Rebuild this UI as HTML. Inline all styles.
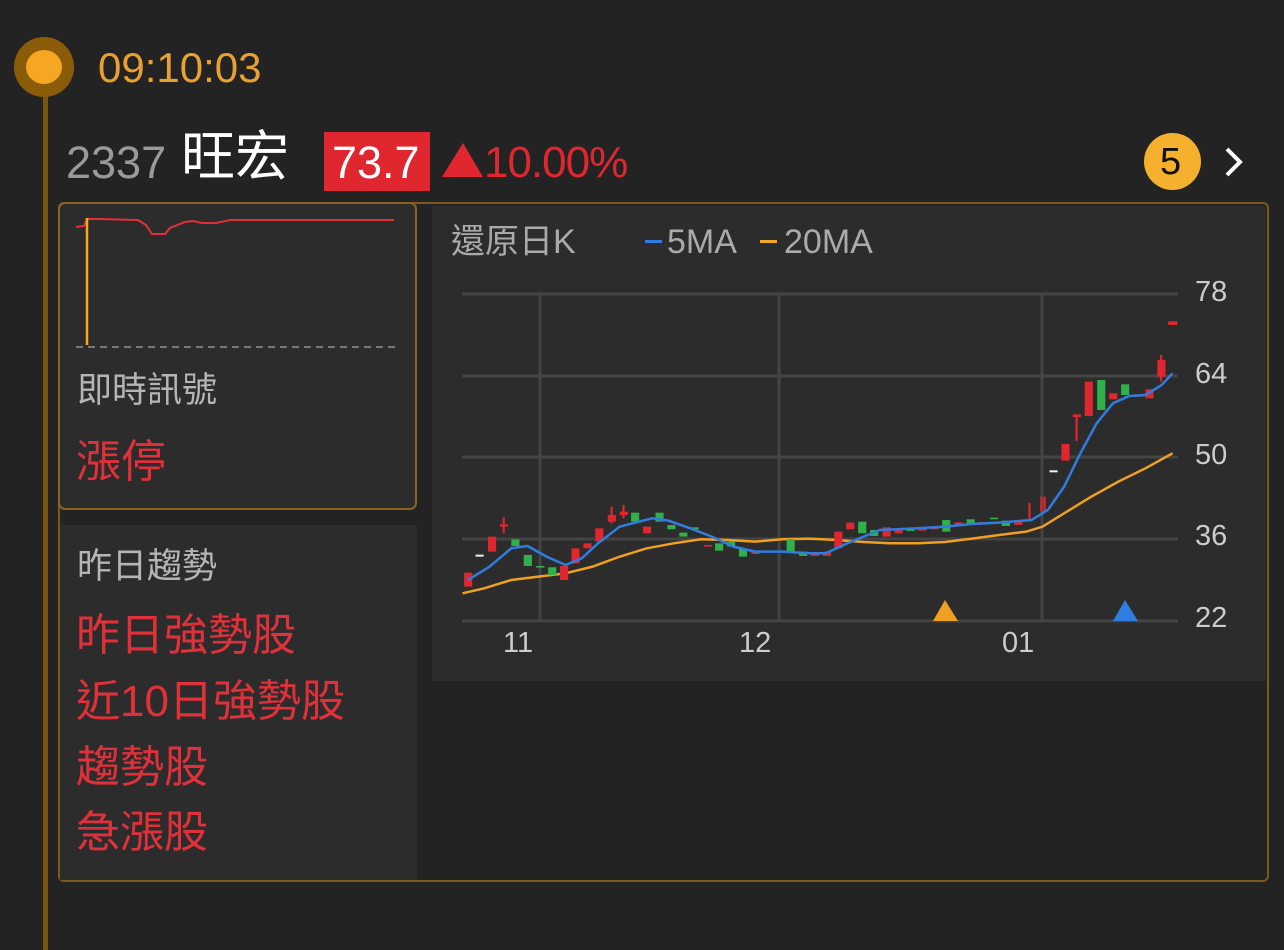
<!DOCTYPE html>
<html><head><meta charset="utf-8"><style>
*{margin:0;padding:0;box-sizing:border-box}
body{width:1284px;height:942px;background:#232323;position:relative;overflow:hidden;font-family:"Liberation Sans","Noto Sans CJK TC",sans-serif}
.a{position:absolute;white-space:nowrap;line-height:1}
</style></head><body>
<div class="a" style="left:43px;top:90px;width:5px;height:860px;background:#7a5510"></div>
<div class="a" style="left:14px;top:37px;width:60px;height:60px;border-radius:50%;background:#8a5c08"></div>
<div class="a" style="left:26px;top:50px;width:36px;height:34px;border-radius:50%;background:#f5a623"></div>
<div class="a" style="left:98px;top:47px;font-size:42px;color:#e8a030">09:10:03</div>

<div class="a" style="left:66px;top:140px;font-size:45px;color:#9a9a9a">2337</div>
<div class="a" style="left:181px;top:130px;font-size:54px;color:#fff">旺宏</div>
<div class="a" style="left:324px;top:132px;width:106px;height:59px;background:#e0262e"></div>
<div class="a" style="left:332px;top:140px;font-size:45px;color:#fff">73.7</div>
<svg class="a" style="left:442px;top:143px" width="42" height="35"><polygon points="21,0 0,34 41,34" fill="#e0262e"/></svg>
<div class="a" style="left:484px;top:141px;font-size:44px;color:#e0262e;letter-spacing:-1px">10.00%</div>
<div class="a" style="left:1144px;top:133px;width:57px;height:57px;border-radius:50%;background:#f5b02e"></div>
<div class="a" style="left:1160px;top:143px;font-size:38px;color:#111">5</div>
<svg class="a" style="left:1222px;top:146px" width="26" height="32"><path d="M5 3 L18 16 L5 29" stroke="#fff" stroke-width="4" fill="none"/></svg>

<div class="a" style="left:58px;top:202px;width:1211px;height:680px;border:2px solid #7a5a1c;border-radius:6px;background:#232323"></div>
<div class="a" style="left:60px;top:525px;width:357px;height:355px;background:#2c2c2c"></div>
<div class="a" style="left:432px;top:206px;width:834px;height:475px;background:#2c2c2c"></div>
<div class="a" style="left:58px;top:202px;width:359px;height:308px;border:2px solid #8a6420;border-radius:7px;background:#2c2c2c"></div>

<svg class="a" style="left:0;top:0" width="420" height="360">
<polyline points="76,227 84,226 87,219 98,219 138,220 146,225 152,234 165,234 170,228 185,222 193,221 202,223 216,223 230,220 394,220" stroke="#e0303a" stroke-width="2" fill="none"/>
<line x1="87" y1="218" x2="87" y2="345" stroke="#f5a623" stroke-width="2.5"/>
<line x1="76" y1="347" x2="398" y2="347" stroke="#777" stroke-width="2" stroke-dasharray="7,5"/>
</svg>
<div class="a" style="left:77px;top:373px;font-size:35px;color:#b5b5b5">即時訊號</div>
<div class="a" style="left:76px;top:439px;font-size:45px;color:#e0303a">漲停</div>
<div class="a" style="left:77px;top:549px;font-size:35px;color:#b5b5b5">昨日趨勢</div>
<div class="a" style="left:76px;top:614px;font-size:44px;color:#e0303a">昨日強勢股</div>
<div class="a" style="left:76px;top:680px;font-size:44px;color:#e0303a">近10日強勢股</div>
<div class="a" style="left:76px;top:746px;font-size:44px;color:#e0303a">趨勢股</div>
<div class="a" style="left:76px;top:811px;font-size:44px;color:#e0303a">急漲股</div>

<div class="a" style="left:451px;top:225px;font-size:34px;color:#aaa">還原日K</div>
<div class="a" style="left:645px;top:240px;width:17px;height:3px;background:#2f7de0"></div>
<div class="a" style="left:667px;top:225px;font-size:34px;color:#aaa">5MA</div>
<div class="a" style="left:760px;top:240px;width:17px;height:3px;background:#f5a623"></div>
<div class="a" style="left:784px;top:225px;font-size:34px;color:#aaa">20MA</div>

<svg class="a" style="left:0;top:0" width="1284" height="942">
<g stroke="#444" stroke-width="3">
<line x1="462" y1="294" x2="1178" y2="294"/><line x1="462" y1="376" x2="1178" y2="376"/><line x1="462" y1="457" x2="1178" y2="457"/><line x1="462" y1="539" x2="1178" y2="539"/><line x1="462" y1="621" x2="1178" y2="621"/>
<line x1="540" y1="294" x2="540" y2="621"/><line x1="779" y1="294" x2="779" y2="621"/><line x1="1042" y1="294" x2="1042" y2="621"/>
</g>
<g transform="translate(430,280) scale(0.542,0.3333)">
<polyline vector-effect="non-scaling-stroke" stroke="#f0a020" stroke-width="2.5" fill="none" points="60,940 100,925 150,900 200,890 250,880 300,860 350,830 400,805 450,790 500,778 550,780 600,785 650,778 700,776 750,780 800,786 850,790 900,790 950,786 1000,776 1050,765 1100,755 1130,740 1170,700 1220,650 1270,605 1320,565 1370,520"/>
<g>
<rect x="63" y="878" width="15" height="42" fill="#e0262e"/>
<rect x="84" y="824" width="15" height="6" fill="#eee"/>
<rect x="107" y="770" width="15" height="45" fill="#e0262e"/>
<rect x="134" y="712" width="4" height="48" fill="#e0262e"/><rect x="129" y="733" width="15" height="7" fill="#e0262e"/>
<rect x="150" y="778" width="15" height="20" fill="#2fb04a"/>
<rect x="173" y="825" width="15" height="33" fill="#2fb04a"/>
<rect x="196" y="858" width="15" height="5" fill="#2fb04a"/>
<rect x="218" y="862" width="15" height="23" fill="#2fb04a"/>
<rect x="240" y="858" width="15" height="42" fill="#e0262e"/>
<rect x="261" y="805" width="15" height="45" fill="#e0262e"/>
<rect x="283" y="790" width="15" height="15" fill="#e0262e"/>
<rect x="305" y="745" width="15" height="40" fill="#e0262e"/>
<rect x="333" y="680" width="4" height="50" fill="#e0262e"/><rect x="328" y="705" width="15" height="20" fill="#e0262e"/>
<rect x="355" y="675" width="4" height="40" fill="#e0262e"/><rect x="350" y="695" width="15" height="10" fill="#e0262e"/>
<rect x="371" y="698" width="15" height="27" fill="#2fb04a"/>
<rect x="393" y="740" width="15" height="20" fill="#e0262e"/>
<rect x="416" y="698" width="15" height="27" fill="#2fb04a"/>
<rect x="438" y="735" width="15" height="13" fill="#2fb04a"/>
<rect x="460" y="758" width="15" height="12" fill="#2fb04a"/>
<rect x="481" y="742" width="15" height="6" fill="#2fb04a"/>
<rect x="505" y="795" width="15" height="5" fill="#e0262e"/>
<rect x="526" y="790" width="15" height="22" fill="#2fb04a"/>
<rect x="548" y="785" width="15" height="15" fill="#2fb04a"/>
<rect x="570" y="808" width="15" height="22" fill="#2fb04a"/>
<rect x="593" y="816" width="15" height="6" fill="#e0262e"/>
<rect x="616" y="813" width="15" height="5" fill="#e0262e"/>
<rect x="658" y="778" width="15" height="40" fill="#2fb04a"/>
<rect x="681" y="815" width="15" height="13" fill="#2fb04a"/>
<rect x="703" y="823" width="15" height="5" fill="#e0262e"/>
<rect x="725" y="815" width="15" height="13" fill="#e0262e"/>
<rect x="746" y="755" width="15" height="50" fill="#e0262e"/>
<rect x="768" y="728" width="15" height="20" fill="#e0262e"/>
<rect x="790" y="725" width="15" height="35" fill="#2fb04a"/>
<rect x="812" y="750" width="15" height="18" fill="#2fb04a"/>
<rect x="835" y="742" width="15" height="28" fill="#e0262e"/>
<rect x="857" y="745" width="15" height="15" fill="#e0262e"/>
<rect x="879" y="748" width="15" height="5" fill="#2fb04a"/>
<rect x="901" y="746" width="15" height="6" fill="#e0262e"/>
<rect x="923" y="743" width="15" height="5" fill="#e0262e"/>
<rect x="945" y="720" width="15" height="35" fill="#2fb04a"/>
<rect x="968" y="727" width="15" height="11" fill="#e0262e"/>
<rect x="990" y="718" width="15" height="14" fill="#2fb04a"/>
<rect x="1011" y="726" width="15" height="5" fill="#e0262e"/>
<rect x="1033" y="713" width="15" height="5" fill="#2fb04a"/>
<rect x="1055" y="722" width="15" height="16" fill="#2fb04a"/>
<rect x="1078" y="725" width="15" height="10" fill="#e0262e"/>
<rect x="1104" y="668" width="4" height="54" fill="#e0262e"/>
<rect x="1126" y="650" width="4" height="45" fill="#e0262e"/><rect x="1132" y="650" width="4" height="45" fill="#e0262e"/>
<rect x="1143" y="571" width="15" height="6" fill="#eee"/>
<rect x="1165" y="492" width="15" height="50" fill="#e0262e"/>
<rect x="1191" y="405" width="4" height="78" fill="#e0262e"/><rect x="1186" y="403" width="15" height="8" fill="#e0262e"/>
<rect x="1208" y="305" width="15" height="103" fill="#e0262e"/>
<rect x="1231" y="300" width="15" height="90" fill="#2fb04a"/>
<rect x="1253" y="340" width="15" height="18" fill="#e0262e"/>
<rect x="1275" y="313" width="15" height="32" fill="#2fb04a"/>
<rect x="1298" y="343" width="15" height="7" fill="#e0262e"/>
<rect x="1320" y="328" width="15" height="27" fill="#e0262e"/>
<rect x="1347" y="225" width="4" height="80" fill="#e0262e"/><rect x="1342" y="240" width="15" height="50" fill="#e0262e"/>
<rect x="1362" y="124" width="17" height="11" fill="#e0262e"/>
</g>
<polyline vector-effect="non-scaling-stroke" stroke="#2f7de0" stroke-width="2.5" fill="none" points="70,900 110,860 150,805 180,798 215,830 250,855 280,835 310,790 350,740 410,715 440,722 480,745 520,770 560,800 600,815 650,815 700,820 730,820 770,790 800,770 830,750 900,745 950,740 1000,732 1050,728 1110,720 1140,690 1170,620 1200,520 1230,430 1260,370 1290,348 1320,345 1350,315 1370,280"/>
</g>
<polygon points="945,600 933,621 958,621" fill="#f0a020"/>
<polygon points="1125,600 1113,621 1138,621" fill="#2f7de0"/>
</svg>
<div class="a" style="left:1195px;top:278px;font-size:29px;color:#ccc">78</div>
<div class="a" style="left:1195px;top:360px;font-size:29px;color:#ccc">64</div>
<div class="a" style="left:1195px;top:441px;font-size:29px;color:#ccc">50</div>
<div class="a" style="left:1195px;top:522px;font-size:29px;color:#ccc">36</div>
<div class="a" style="left:1195px;top:604px;font-size:29px;color:#ccc">22</div>
<div class="a" style="left:503px;top:629px;font-size:29px;color:#ccc">11</div>
<div class="a" style="left:739px;top:629px;font-size:29px;color:#ccc">12</div>
<div class="a" style="left:1002px;top:629px;font-size:29px;color:#ccc">01</div>
</body></html>
